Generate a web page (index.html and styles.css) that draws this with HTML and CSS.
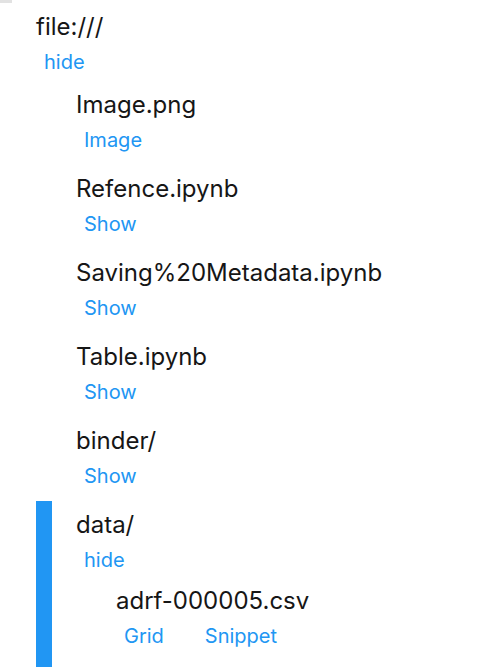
FILE: index.html
```html
<!DOCTYPE html>
<html>
<head>
<meta charset="utf-8">
<link rel="stylesheet" href="styles.css">
</head>
<body>
<div class="corner"></div>
<div class="tree">
  <div class="item root">
    <div class="name">file:///</div>
    <div class="links"><a class="link">hide</a></div>
    <div class="children">
      <div class="item">
        <div class="name">Image.png</div>
        <div class="links"><a class="link">Image</a></div>
      </div>
      <div class="item">
        <div class="name">Refence.ipynb</div>
        <div class="links"><a class="link">Show</a></div>
      </div>
      <div class="item">
        <div class="name">Saving%20Metadata.ipynb</div>
        <div class="links"><a class="link">Show</a></div>
      </div>
      <div class="item">
        <div class="name">Table.ipynb</div>
        <div class="links"><a class="link">Show</a></div>
      </div>
      <div class="item">
        <div class="name">binder/</div>
        <div class="links"><a class="link">Show</a></div>
      </div>
      <div class="item active">
        <div class="name">data/</div>
        <div class="links"><a class="link">hide</a></div>
        <div class="children">
          <div class="item">
            <div class="name">adrf-000005.csv</div>
            <div class="links"><a class="link">Grid</a><a class="link">Snippet</a></div>
          </div>
        </div>
      </div>
    </div>
  </div>
</div>
</body>
</html>
```

FILE: styles.css
```css
html, body {
  margin: 0;
  padding: 0;
  background: #ffffff;
}

body {
  font-family: Inter, "Noto Sans", sans-serif;
  color: #161616;
  height: 668px;
  overflow: hidden;
  position: relative;
}

.corner {
  position: absolute;
  left: 0;
  top: 0;
  width: 12px;
  height: 3px;
  background: #e2e2e2;
}

.tree {
  padding: 3px 0 0 36px;
}

.item {
  padding: 9px 0 6px 40px;
}

.item.root {
  padding-left: 0;
}

.item.active {
  border-left: 16px solid #2196f3;
  padding-left: 24px;
}

.item.active > .children {
  margin-top: -2px;
}

.name {
  font-size: 24px;
  line-height: 30px;
  white-space: nowrap;
}

.links {
  display: flex;
  gap: 41px;
  margin: 8px 0 7px 8px;
}

.link {
  font-size: 20px;
  line-height: 24px;
  color: #2196f3;
  cursor: pointer;
}
```
